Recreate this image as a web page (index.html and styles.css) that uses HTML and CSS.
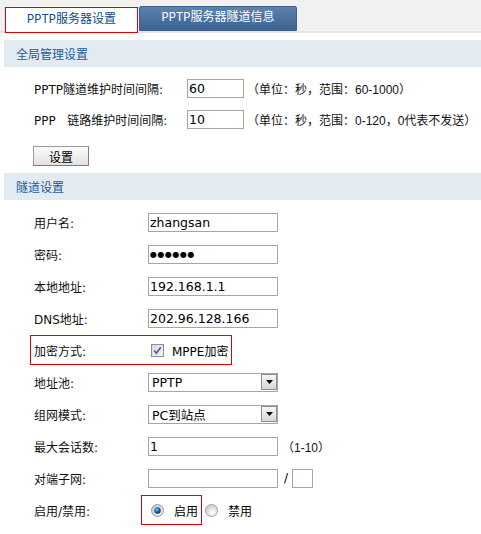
FILE: index.html
```html
<!DOCTYPE html>
<html lang="zh-CN">
<head>
    <meta charset="UTF-8">
    <meta name="viewport" content="width=device-width, initial-scale=1.0">
    <title>PPTP服务器设置</title>
    <link rel="stylesheet" href="styles.css">
</head>
<body>
    <div class="tabs">
        <div class="tab tab-active">PPTP服务器设置</div>
        <div class="tab tab-info">PPTP服务器隧道信息</div>
    </div>

    <!-- 全局管理设置 -->
    <div class="section-title">全局管理设置</div>
    <div class="form global">
        <div class="row">
            <label class="lbl">PPTP隧道维护时间间隔:</label>
            <input class="txt short" type="text" value="60">
            <span class="note">（单位：秒，范围：60-1000）</span>
        </div>
        <div class="row">
            <label class="lbl">PPP&nbsp;&nbsp;&nbsp;链路维护时间间隔:</label>
            <input class="txt short" type="text" value="10">
            <span class="note">（单位：秒，范围：0-120，0代表不发送）</span>
        </div>
        <div class="actions">
            <button class="btn">设置</button>
        </div>
    </div>

    <!-- 隧道设置 -->
    <div class="section-title">隧道设置</div>
    <div class="form tunnel">
        <div class="row">
            <label class="lbl">用户名:</label>
            <input class="txt long" type="text" value="zhangsan">
        </div>
        <div class="row">
            <label class="lbl">密码:</label>
            <input class="txt long pwd" type="text" value="●●●●●●">
        </div>
        <div class="row">
            <label class="lbl">本地地址:</label>
            <input class="txt long" type="text" value="192.168.1.1">
        </div>
        <div class="row">
            <label class="lbl">DNS地址:</label>
            <input class="txt long" type="text" value="202.96.128.166">
        </div>
        <div class="row">
            <div class="mark mark-encrypt">
                <label class="lbl">加密方式:</label>
                <span class="check">
                    <svg width="13" height="13" viewBox="0 0 13 13">
                        <defs>
                            <linearGradient id="cbg" x1="0" y1="0" x2="1" y2="1">
                                <stop offset="0" stop-color="#d9d9d9"/>
                                <stop offset="1" stop-color="#f4f4f4"/>
                            </linearGradient>
                        </defs>
                        <rect x="0.5" y="0.5" width="12" height="12" fill="url(#cbg)" stroke="#8e8f8f"/>
                        <path d="M3.2 6.4 L5.4 9.2 L9.8 3.2" fill="none" stroke="#4b5ba6" stroke-width="1.6"/>
                    </svg>
                </span>
                <span class="check-text">MPPE加密</span>
            </div>
        </div>
        <div class="row">
            <label class="lbl">地址池:</label>
            <div class="select">
                <span class="val">PPTP</span>
                <span class="arrow">
                    <svg width="7" height="4" viewBox="0 0 7 4"><path d="M0 0 H7 L3.5 4 Z" fill="#000"/></svg>
                </span>
            </div>
        </div>
        <div class="row">
            <label class="lbl">组网模式:</label>
            <div class="select">
                <span class="val">PC到站点</span>
                <span class="arrow">
                    <svg width="7" height="4" viewBox="0 0 7 4"><path d="M0 0 H7 L3.5 4 Z" fill="#000"/></svg>
                </span>
            </div>
        </div>
        <div class="row">
            <label class="lbl">最大会话数:</label>
            <input class="txt long" type="text" value="1">
            <span class="note range">（1-10）</span>
        </div>
        <div class="row">
            <label class="lbl">对端子网:</label>
            <input class="txt long" type="text" value="">
            <span class="slash">/</span>
            <input class="txt tiny" type="text" value="">
        </div>
        <div class="row">
            <label class="lbl">启用/禁用:</label>
            <div class="mark mark-radio">
                <span class="radio">
                    <svg width="13" height="13" viewBox="0 0 13 13">
                        <defs>
                            <radialGradient id="ron" cx="0.4" cy="0.35" r="0.6">
                                <stop offset="0" stop-color="#8fd0f5"/>
                                <stop offset="0.5" stop-color="#1f77b8"/>
                                <stop offset="1" stop-color="#0c3e6e"/>
                            </radialGradient>
                            <linearGradient id="ring" x1="0" y1="0" x2="1" y2="1">
                                <stop offset="0" stop-color="#c4c4c4"/>
                                <stop offset="1" stop-color="#f2f2f2"/>
                            </linearGradient>
                        </defs>
                        <circle cx="6.5" cy="6.5" r="6" fill="url(#ring)" stroke="#9a9a9a"/>
                        <circle cx="6.5" cy="6.5" r="3.2" fill="url(#ron)"/>
                    </svg>
                </span>
                <span class="radio-text">启用</span>
            </div>
            <span class="radio off">
                <svg width="13" height="13" viewBox="0 0 13 13">
                    <defs>
                        <radialGradient id="roff" cx="0.6" cy="0.65" r="0.7">
                            <stop offset="0" stop-color="#ffffff"/>
                            <stop offset="1" stop-color="#c8c8c8"/>
                        </radialGradient>
                    </defs>
                    <circle cx="6.5" cy="6.5" r="6" fill="url(#roff)" stroke="#a0a0a0"/>
                </svg>
            </span>
            <span class="radio-text">禁用</span>
        </div>
    </div>
</body>
</html>
```

FILE: styles.css
```css
body {
    margin: 0;
    font-family: "DejaVu Sans", "Noto Sans CJK SC", sans-serif;
    font-size: 12px;
    color: #000;
    background-color: #fff;
}
.tabs {
    display: flex;
    align-items: flex-end;
    height: 31px;
    padding-left: 5px;
    background-color: #f1f1f1;
    border-bottom: 2px solid #e3e3e3;
}
.tab {
    box-sizing: border-box;
    font-family: "Liberation Mono", "Noto Sans CJK SC", monospace;
    font-size: 12px;
    text-align: center;
}
.tab-active {
    width: 133px;
    height: 26px;
    margin-bottom: -2px;
    line-height: 24px;
    background-color: #fff;
    border: 1px solid #e00000;
    color: #0f4a88;
}
.tab-info {
    width: 158px;
    height: 25px;
    margin-left: 1px;
    line-height: 23px;
    color: #fff;
    background: linear-gradient(#5d83af, #3a6190);
    border: 1px solid #3d5f88;
    border-radius: 2px 2px 0 0;
}
.section-title {
    margin: 7px 0 0 4px;
    height: 27px;
    line-height: 27px;
    padding-left: 12px;
    background-color: #e2eaf2;
    color: #1d5c9b;
    font-family: "Noto Sans CJK SC", sans-serif;
    font-size: 12px;
}
.form {
    margin-left: 4px;
    padding-left: 30px;
}
.global {
    padding-top: 6px;
}
.tunnel {
    padding-top: 6px;
}
.row {
    display: flex;
    align-items: center;
    height: 31px;
    white-space: nowrap;
}
.tunnel .row {
    height: 32px;
}
.lbl {
    flex: none;
    color: #111;
}
.global .lbl {
    width: 153px;
}
.tunnel .lbl {
    width: 114px;
}
.txt {
    box-sizing: border-box;
    height: 19px;
    margin: 0;
    padding: 0 1px;
    border: 1px solid #a5a5a5;
    font-family: "DejaVu Sans", "Noto Sans CJK SC", sans-serif;
    font-size: 12.5px;
    color: #000;
    background-color: #fff;
    outline: none;
}
.short {
    width: 57px;
}
.long {
    width: 130px;
}
.tiny {
    width: 21px;
}
.pwd {
    font-size: 8px;
    letter-spacing: 0.5px;
}
.note {
    margin-left: 3px;
    color: #111;
    font-family: "Liberation Sans", "Noto Sans CJK SC", sans-serif;
}
.range {
    margin-left: 4px;
}
.slash {
    margin: 0 4px 0 6px;
}
.actions {
    display: flex;
    margin-left: -1px;
    padding-top: 11px;
}
.btn {
    box-sizing: border-box;
    width: 56px;
    height: 20px;
    margin: 0;
    padding: 0;
    font-family: "Noto Sans CJK SC", sans-serif;
    font-size: 12px;
    color: #000;
    background: linear-gradient(#fbfbfb, #e2e2e2);
    border: 1px solid #9a9a9a;
    border-right-color: #7d7d7d;
    border-bottom-color: #7d7d7d;
}
.mark {
    display: flex;
    align-items: center;
    box-sizing: border-box;
    height: 30px;
    border: 1px solid #e00000;
}
.mark-encrypt {
    margin-left: -4px;
    padding: 0 3px;
}
.mark-radio {
    margin-left: -7px;
    padding: 0 3px 0 9px;
}
.check {
    display: flex;
    margin-left: 3px;
}
.check-text {
    margin-left: 8px;
}
.select {
    display: flex;
    align-items: center;
    box-sizing: border-box;
    width: 130px;
    height: 19px;
    border: 1px solid #a5a5a5;
    font-size: 12.5px;
}
.val {
    flex: 1;
    padding-left: 3px;
}
.arrow {
    display: flex;
    align-items: center;
    justify-content: center;
    box-sizing: border-box;
    width: 16px;
    height: 16px;
    border: 1px solid #8f8f8f;
    background: linear-gradient(#f7f7f7, #d6d6d6);
}
.radio {
    display: flex;
}
.radio-text {
    margin-left: 10px;
}
.off {
    margin-left: 3px;
}
```
